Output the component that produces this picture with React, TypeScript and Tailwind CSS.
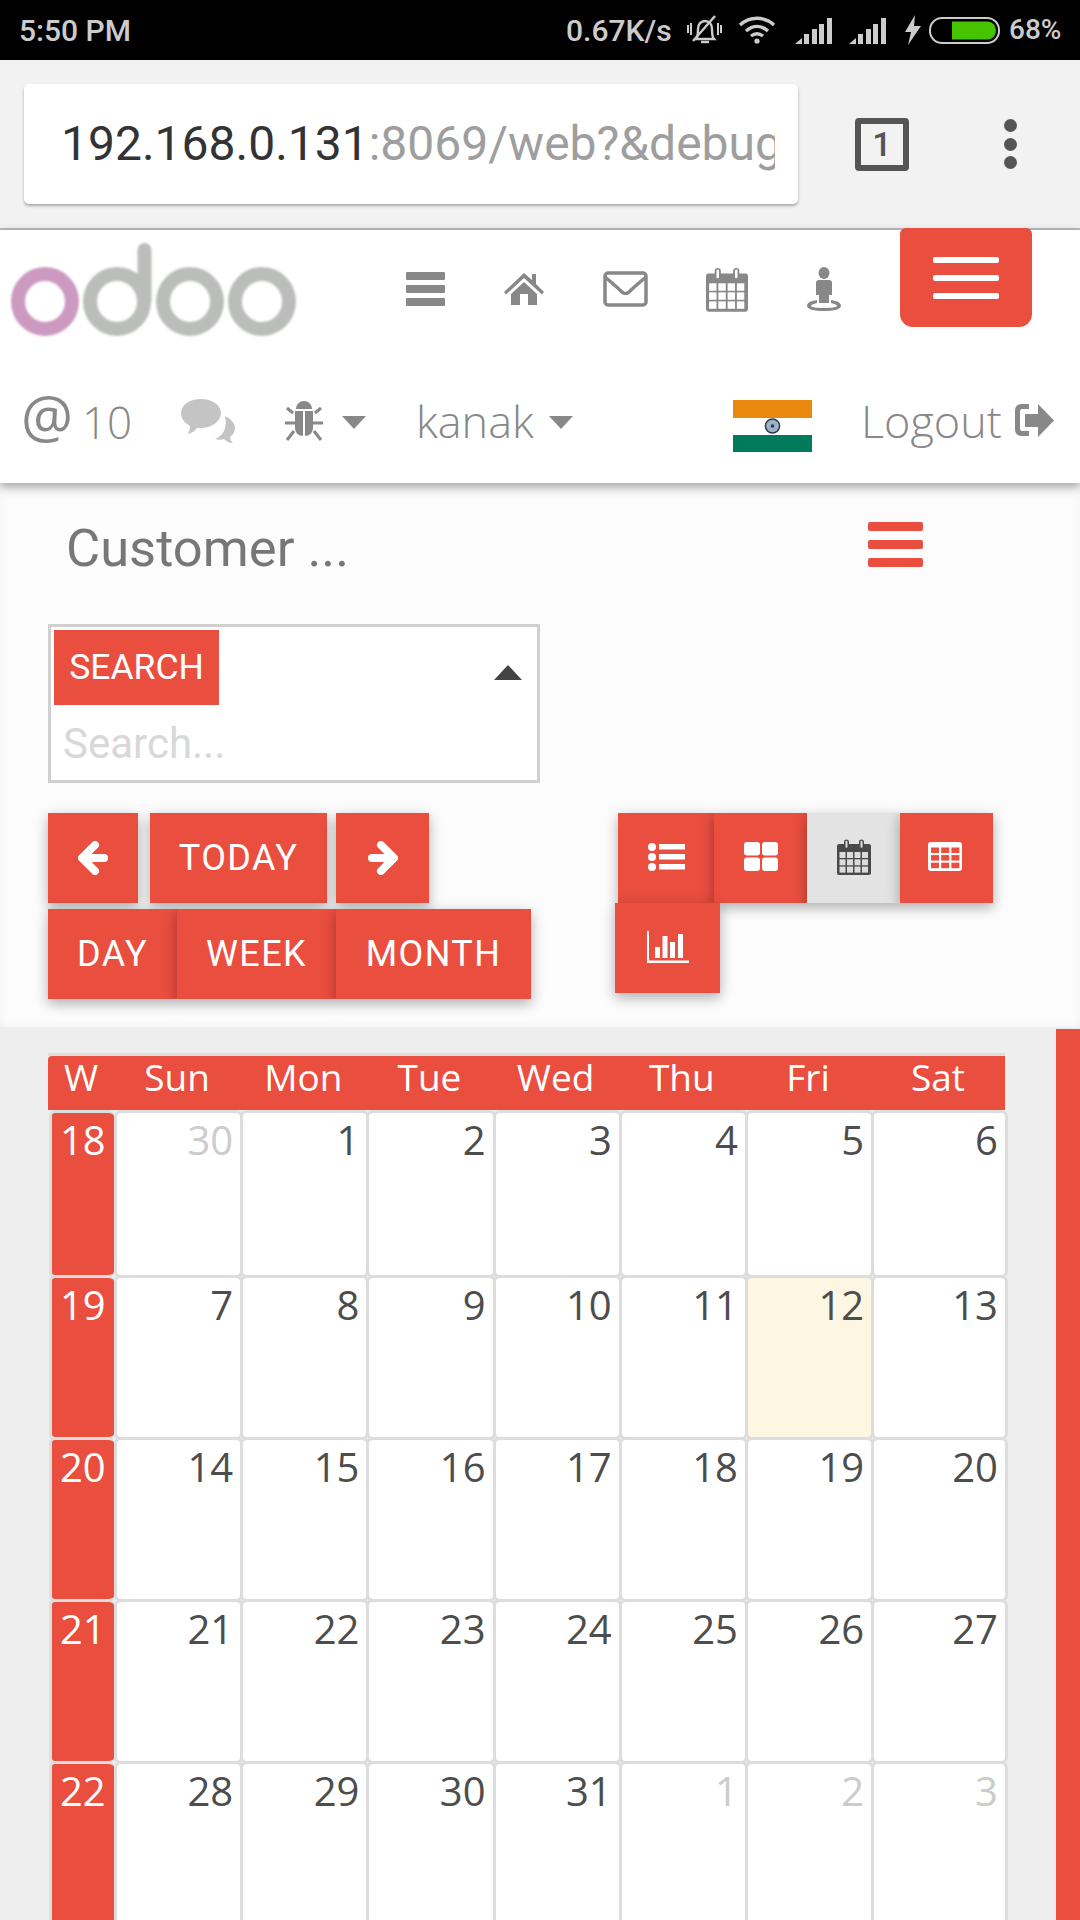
import React from "react";

const RED = "bg-[#e94e3f]";

const weeks = [
  { n: 18, days: [30, 1, 2, 3, 4, 5, 6], muted: [0], h: "h-[165px]" },
  { n: 19, days: [7, 8, 9, 10, 11, 12, 13], muted: [], h: "h-[162px]" },
  { n: 20, days: [14, 15, 16, 17, 18, 19, 20], muted: [], h: "h-[162px]" },
  { n: 21, days: [21, 22, 23, 24, 25, 26, 27], muted: [], h: "h-[162px]" },
  { n: 22, days: [28, 29, 30, 31, 1, 2, 3], muted: [4, 5, 6], h: "h-[200px]" },
];

const headers = ["Sun", "Mon", "Tue", "Wed", "Thu", "Fri", "Sat"];

const Bell = () => (
  <svg width="35" height="31" viewBox="0 0 35 31" fill="none" stroke="#ccc" strokeWidth="2.4">
    <path d="M9 24c2-2 2-5 2-10 0-5 3-8 7-8s7 3 7 8c0 5 0 8 2 10z" />
    <path d="M14 27h8" />
    <path d="M1 10v8M4 8v12M34 10v8M31 8v12" strokeWidth="2" />
    <path d="M6 26L28 1" />
  </svg>
);

const Wifi = () => (
  <svg width="38" height="28" viewBox="0 0 38 28" fill="none" stroke="#ccc" strokeWidth="3.4">
    <path d="M2 9c10-9 24-9 34 0" />
    <path d="M8 15c7-6 15-6 22 0" />
    <path d="M13 20c4-3 8-3 12 0" />
    <circle cx="19" cy="25" r="2.6" fill="#ccc" stroke="none" />
  </svg>
);

const Signal = () => (
  <svg width="37" height="26" viewBox="0 0 37 26" fill="#ccc">
    <path d="M0 26L7 20V26Z" />
    <rect x="9" y="16" width="5" height="10" />
    <rect x="17" y="11" width="5" height="15" />
    <rect x="24" y="6" width="5" height="20" />
    <rect x="32" y="0" width="5" height="26" />
  </svg>
);

const Battery = () => (
  <svg width="71" height="27" viewBox="0 0 71 27" fill="none">
    <rect x="1" y="1" width="69" height="25" rx="12" stroke="#ccc" strokeWidth="2" />
    <path d="M23 4.500H59a8 9 0 0 1 8 9a8 9 0 0 1-8 9H23z" fill="#46c400" />
  </svg>
);

const Calendar = ({ color, cell, w, h }: { color: string; cell: string; w: number; h: number }) => (
  <svg width={w} height={h} viewBox="0 0 34 36" fill={color}>
    <path d="M2 5h5V3a2.500 2.500 0 0 1 5 0v2h10V3a2.500 2.500 0 0 1 5 0v2h5a2 2 0 0 1 2 2v27a2 2 0 0 1-2 2H2a2 2 0 0 1-2-2V7a2 2 0 0 1 2-2z" />
    <rect x="8.500" y="1.800" width="2" height="7" rx="1" fill={cell} />
    <rect x="23.500" y="1.800" width="2" height="7" rx="1" fill={cell} />
    {[0, 1, 2].map((r) =>
      [0, 1, 2, 3].map((c) => (
        <rect key={r * 4 + c} x={2.500 + c * 7.500} y={13 + r * 7.300} width="6" height="6" fill={cell} />
      ))
    )}
  </svg>
);

const Logo = () => (
  <svg width="285" height="93" viewBox="0 0 285 93" fill="none" className="blur-[0.8px]">
    <ellipse cx="34" cy="58.500" rx="27" ry="27.500" stroke="#cc99c0" strokeWidth="14" />
    <ellipse cx="106" cy="58.500" rx="27" ry="27.500" stroke="#bbbdbb" strokeWidth="14" />
    <ellipse cx="179" cy="58.500" rx="27" ry="27.500" stroke="#bbbdbb" strokeWidth="14" />
    <ellipse cx="251" cy="58.500" rx="27" ry="27.500" stroke="#bbbdbb" strokeWidth="14" />
    <path d="M133.500 58V7" stroke="#bbbdbb" strokeWidth="14" strokeLinecap="round" />
  </svg>
);

const Caret = () => <div className="h-0 w-0 border-x-[12px] border-t-[13px] border-x-transparent border-t-[#888]" />;

const Bars = ({ cls }: { cls: string }) => (
  <div className="flex flex-col gap-[12px]">
    <div className={`h-[6px] w-[66px] rounded-[2px] ${cls}`} />
    <div className={`h-[6px] w-[66px] rounded-[2px] ${cls}`} />
    <div className={`h-[6px] w-[66px] rounded-[2px] ${cls}`} />
  </div>
);

const BTN =
  "relative flex h-[90px] items-center justify-center bg-[#e94e3f] text-white shadow-[0_5px_11px_0_rgba(0,0,0,0.18),0_4px_15px_0_rgba(0,0,0,0.15)]";

export default function App() {
  return (
    <div className="h-[1920px] w-[1080px] overflow-hidden bg-white font-['Roboto',sans-serif]">
      {/* status bar */}
      <div className="flex h-[60px] items-center bg-black pl-[19px] text-[30px] font-medium text-[#ccc]">
        <span className="w-[110px] whitespace-nowrap">5:50 PM</span>
        <span className="ml-[437px] w-[104px] whitespace-nowrap">0.67K/s</span>
        <div className="ml-[17px]"><Bell /></div>
        <div className="ml-[16px]"><Wifi /></div>
        <div className="ml-[19px] mt-[2px]"><Signal /></div>
        <div className="ml-[17px] mt-[2px]"><Signal /></div>
        <svg className="ml-[19px]" width="16" height="30" viewBox="0 0 16 30" fill="#ccc">
          <path d="M10 0L0 17h6L3 30 16 11H9z" />
        </svg>
        <div className="ml-[8px]"><Battery /></div>
        <span className="ml-[9px] text-[28px]">68%</span>
      </div>

      {/* browser bar */}
      <div className="flex h-[170px] items-center border-b-2 border-[#bdbdbd] bg-[#f2f2f2] pl-[24px]">
        <div className="flex h-[120px] w-[774px] items-center rounded-[5px] bg-white pl-[37px] pr-[23px] shadow-[0_2px_3px_rgba(0,0,0,0.3)]">
          <div className="overflow-hidden whitespace-nowrap text-[48px] text-[#333]">
            192.168.0.131<span className="text-[#9e9e9e]">:8069/web?&amp;debug</span>
          </div>
        </div>
        <div className="ml-[57px] flex h-[53px] w-[54px] items-center justify-center rounded-[4px] border-[6px] border-[#555] text-[34px] font-medium leading-none text-[#555]">
          1
        </div>
        <div className="ml-[95px] flex flex-col gap-[5.500px]">
          <div className="h-[13px] w-[13px] rounded-full bg-[#555]" />
          <div className="h-[13px] w-[13px] rounded-full bg-[#555]" />
          <div className="h-[13px] w-[13px] rounded-full bg-[#555]" />
        </div>
      </div>

      {/* odoo header */}
      <div className="relative z-10 h-[253px] bg-white shadow-[0_4px_10px_rgba(0,0,0,0.35)] font-['Open_Sans',sans-serif] font-light text-[#888]">
        <div className="flex h-[118px] items-center pl-[11px]">
          <Logo />
          <div className="ml-[110px] flex flex-col gap-[5px]">
            <div className="h-[8px] w-[39px] rounded-[1px] bg-[#888]" />
            <div className="h-[8px] w-[39px] rounded-[1px] bg-[#888]" />
            <div className="h-[8px] w-[39px] rounded-[1px] bg-[#888]" />
          </div>
          <svg className="ml-[59px]" width="40" height="32" viewBox="0 0 40 32" fill="#888">
            <path d="M20 0L28 7V1h4v10l8 8-2 2.500L20 5 2 21.500 0 19z" />
            <path d="M20 9l13 12v11H24V21h-8v11H7V21z" />
          </svg>
          <svg className="ml-[59px]" width="45" height="36" viewBox="0 0 45 36" fill="none" stroke="#888" strokeWidth="3.500">
            <rect x="2" y="2" width="41" height="32" rx="3" />
            <path d="M2 6c6 5 14 12 17 15 2 2 5 2 7 0 3-3 11-10 17-15" />
          </svg>
          <div className="ml-[58px] flex">
            <Calendar color="#888" cell="#fff" w={42} h={45} />
          </div>
          <svg className="ml-[58px]" width="36" height="45" viewBox="0 0 36 45" fill="#888">
            <ellipse cx="18" cy="6" rx="5.500" ry="6" />
            <path d="M10 16a3 3 0 0 1 3-3h10a3 3 0 0 1 3 3v12h-3v8h-10v-8h-3z" />
            <path d="M11 33C4 34 1 36 1 39c0 3 7 5 17 5s17-2 17-5c0-3-3-5-10-6v3c4 1 6 2 6 3s-5 2-13 2-13-1-13-2 2-2 6-3z" />
          </svg>
          <div className={`ml-[58px] flex h-[99px] w-[132px] items-center justify-center self-start rounded-b-[13px] rounded-t-[6px] ${RED} -mt-[2px]`}>
            <Bars cls="bg-white" />
          </div>
        </div>
        <div className="flex h-[135px] items-center pl-[21px] pt-[10px] text-[45px] leading-none">
          <span className="-mt-[10px] w-[61px] text-[58px] font-medium">@</span>
          <span className="mt-[2px] w-[49px] text-[44px]">10</span>
          <svg className="ml-[50px]" width="55" height="44" viewBox="0 0 55 44" fill="#c4c4c4">
            <path d="M44 17c6 3 10 7 10 12 0 4-2 7-5 9 0 2 1 4 3 6-4 0-7-2-9-4-3 1-6 1-9 0 5-2 9-6 10-11 1-4 1-8 0-12z" />
            <path d="M20 0c11 0 20 6 20 14s-9 15-20 15c-2 0-3 0-4 0-2 3-5 5-9 6 1-2 2-5 2-8C4 24 0 20 0 14 0 6 9 0 20 0z" />
          </svg>
          <svg className="ml-[49px]" width="38" height="41" viewBox="0 0 38 41" fill="#888">
            <path d="M11 9a8 8 0 0 1 16 0z" />
            <path d="M10 11h8v25c-4 0-8-3-8-8zM20 11h8v17c0 5-4 8-8 8z" />
            <path d="M8 13L2 8M30 13l6-5M0 23h10M28 23h10M9 31l-7 9M29 31l7 9" stroke="#888" strokeWidth="3" />
          </svg>
          <div className="ml-[19px] mt-[4px]"><Caret /></div>
          <span className="ml-[50px] w-[116px]">kanak</span>
          <div className="ml-[17px] mt-[4px]"><Caret /></div>
          <svg className="ml-[160px] mt-[10px]" width="79" height="52" viewBox="0 0 78 52" preserveAspectRatio="none">
            <rect width="78" height="18" fill="#eb880e" />
            <rect y="18" width="78" height="17" fill="#fff" />
            <rect y="35" width="78" height="17" fill="#007a5a" />
            <circle cx="39" cy="26" r="7" fill="#9fb2c4" stroke="#2d3a55" strokeWidth="1.500" />
            <circle cx="39" cy="26" r="1.800" fill="#2d3a55" />
          </svg>
          <span className="ml-[49px] w-[140px]">Logout</span>
          <svg className="ml-[14px]" width="39" height="35" viewBox="0 0 39 35" fill="#888">
            <path d="M14 1H6a6 6 0 0 0-6 6v20a6 6 0 0 0 6 6h8v-5H7a2 2 0 0 1-2-2V8a2 2 0 0 1 2-2h7z" />
            <path d="M23 1l16 16.500L23 34V24H10V11h13z" />
          </svg>
        </div>
      </div>

      {/* control panel */}
      <div className="h-[544px] bg-[#fcfcfc] pl-[48px] shadow-[inset_0_0_10px_rgba(0,0,0,0.05)]">
        <div className="flex h-[141px] items-start">
          <span className="ml-[18px] mt-[33px] w-[802px] text-[52.500px] leading-[64px] text-[#777]">Customer ...</span>
          <div className="mt-[39px] flex flex-col gap-[9px]">
            <div className="h-[9px] w-[55px] rounded-[2px] bg-[#e94e3f]" />
            <div className="h-[9px] w-[55px] rounded-[2px] bg-[#e94e3f]" />
            <div className="h-[9px] w-[55px] rounded-[2px] bg-[#e94e3f]" />
          </div>
        </div>
        <div className="h-[159px] w-[492px] border-[3px] border-[#d0d0d0] bg-white pl-[3px] pt-[3px]">
          <div className="flex items-start justify-between pr-[15px]">
            <div className="flex h-[75px] w-[165px] items-center justify-center bg-[#e94e3f] text-[35.500px] text-white">SEARCH</div>
            <div className="mt-[35px] h-0 w-0 border-x-[14px] border-b-[15px] border-x-transparent border-b-[#444]" />
          </div>
          <div className="pl-[9px] pt-[14px] text-[42px] leading-[50px] text-[#d8d8d8]">Search...</div>
        </div>
        <div className="mt-[30px] flex">
          <div className="w-[567px]">
            <div className="flex">
              <div className={`${BTN} w-[90px]`}>
                <svg width="30" height="34" viewBox="0 0 30 34" fill="none" stroke="#fff" strokeWidth="8" strokeLinecap="round" strokeLinejoin="round">
                  <path d="M17 4L4 17l13 13M5 17h21" />
                </svg>
              </div>
              <div className={`${BTN} ml-[12px] w-[177px] text-[36px] tracking-[1.4px]`}>TODAY</div>
              <div className={`${BTN} ml-[9px] w-[93px]`}>
                <svg width="30" height="34" viewBox="0 0 30 34" fill="none" stroke="#fff" strokeWidth="8" strokeLinecap="round" strokeLinejoin="round">
                  <path d="M13 4l13 13-13 13M25 17H4" />
                </svg>
              </div>
            </div>
            <div className="mt-[6px] flex text-[36px] tracking-[1.4px]">
              <div className={`${BTN} w-[129px]`}>DAY</div>
              <div className={`${BTN} w-[159px]`}>WEEK</div>
              <div className={`${BTN} w-[195px]`}>MONTH</div>
            </div>
          </div>
          <div className="flex flex-col">
            <div className="ml-[3px] flex">
              <div className={`${BTN} w-[96px]`}>
                <svg className="-mt-[2px]" width="37" height="28" viewBox="0 0 37 28" fill="#fff">
                  <circle cx="4" cy="4" r="4" />
                  <circle cx="4" cy="14" r="4" />
                  <circle cx="4" cy="24" r="4" />
                  <rect x="11" y="1" width="26" height="5.500" />
                  <rect x="11" y="11" width="26" height="5.500" />
                  <rect x="11" y="21" width="26" height="5.500" />
                </svg>
              </div>
              <div className={`${BTN} w-[93px]`}>
                <svg className="-mt-[4px]" width="34" height="29" viewBox="0 0 34 29" fill="#fff">
                  <rect width="16" height="13.500" rx="3" />
                  <rect x="18" width="16" height="13.500" rx="3" />
                  <rect y="15.500" width="16" height="13.500" rx="3" />
                  <rect x="18" y="15.500" width="16" height="13.500" rx="3" />
                </svg>
              </div>
              <div className={`${BTN} !bg-[#e3e3e3] w-[93px]`}>
                <div className="-mt-[2px] flex"><Calendar color="#4a4a4a" cell="#dcdcdc" w={34} h={36} /></div>
              </div>
              <div className={`${BTN} w-[93px]`}>
                <svg className="-mt-[4px] mr-[4px]" width="34" height="29" viewBox="0 0 34 29" fill="#e94e3f">
                  <rect width="34" height="29" rx="3" fill="#fff" />
                  {[0, 1, 2].map((r) =>
                    [0, 1, 2].map((c) => (
                      <rect key={r * 3 + c} x={3 + c * 10.200} y={5.500 + r * 7.600} width="8" height="5.500" />
                    ))
                  )}
                </svg>
              </div>
            </div>
            <div className={`${BTN} w-[105px]`}>
              <svg className="-mt-[2px]" width="42" height="32" viewBox="0 0 42 32" fill="#fff">
                <path d="M0 0h2v29.500h40V32H0z" />
                <rect x="8" y="16" width="5" height="11" />
                <rect x="15.500" y="5" width="5" height="22" />
                <rect x="23" y="11" width="5" height="16" />
                <rect x="31" y="3" width="5" height="24" />
              </svg>
            </div>
          </div>
        </div>
      </div>

      {/* calendar */}
      <div className="flex h-[893px] items-start bg-[#efeeee]">
        <div className="ml-[48px] mt-[26px] w-[957px]">
          <div className="grid grid-cols-[66px_repeat(6,126.200px)_133.800px] border-t-[3px] border-[#ddd]">
            <div className={`flex h-[54px] items-center justify-center rounded-tl-[4px] ${RED} pb-[13px] font-['Open_Sans',sans-serif] text-[37px] leading-none text-white`}>W</div>
            {headers.map((h) => (
              <div key={h} className={`flex h-[54px] items-center justify-center ${RED} pb-[13px] font-['Open_Sans',sans-serif] text-[37px] leading-none text-white`}>
                {h}
              </div>
            ))}
          </div>
          {weeks.map((week) => (
            <div key={week.n} className={`grid grid-cols-[66px_repeat(6,126.200px)_133.800px] ${week.h} font-['Open_Sans',sans-serif] text-[40px] leading-[54px]`}>
              <div className="-mb-[3px] ml-[1px] overflow-hidden rounded-[6px] border-[3px] border-r-0 border-[#ddd] bg-[#e94e3f]">
                <div className="pl-[8px] text-white">{week.n}</div>
              </div>
              {week.days.map((d, i) => (
                <div
                  key={i}
                  className={`-mb-[3px] -mr-[3px] rounded-[7px] border-[3px] border-[#ddd] pr-[7px] text-right ${
                    week.n === 19 && d === 12 ? "bg-[#fcf6e2]" : "bg-white"
                  } ${week.muted.includes(i) ? "text-[#ccc]" : "text-[#4d4d4d]"}`}
                >
                  {d}
                </div>
              ))}
            </div>
          ))}
        </div>
        <div className={`ml-[51px] mt-[2px] h-[891px] w-[24px] ${RED}`} />
      </div>
    </div>
  );
}
